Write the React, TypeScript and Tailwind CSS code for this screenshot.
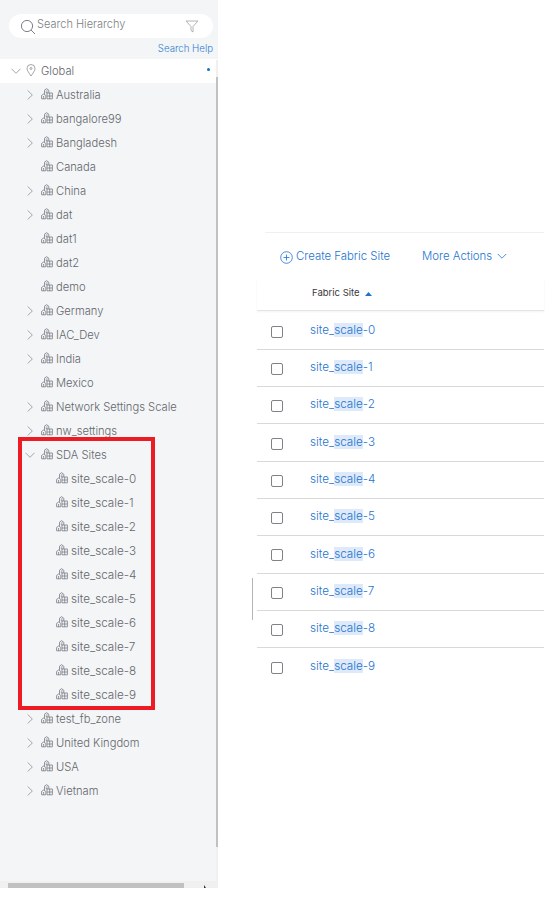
import React from "react";

const Chev = ({ open }: { open?: boolean }) => (
  <svg width="10" height="10" viewBox="0 0 10 10" fill="none" stroke="#8d9196" strokeWidth="0.8">
    {open ? <path d="M0.5 2.8 L5 7.3 L9.5 2.8" /> : <path d="M2.8 0.5 L7.3 5 L2.8 9.5" />}
  </svg>
);

const Site = () => (
  <svg width="12" height="12" viewBox="0 0 12 12" fill="#f4f5f7" stroke="#85898e" strokeWidth="0.9" className="shrink-0 -translate-y-[1px]">
    <path d="M3.5 6 V2.2 L5.5 0.7 L7.8 2.2 V5" />
    <path d="M4.8 3 H6.6 M4.8 4.6 H6.6" />
    <path d="M0.6 10.8 V7.4 L2.6 6 L4.8 7.4 V10.8 Z" />
    <path d="M6 10.8 V5 H11.4 V10.8 Z" />
    <path d="M8.7 5 V10.8 M6 8 H11.4 M2.6 8 V10.8" />
  </svg>
);

const rowsTop = ["Australia", "bangalore99", "Bangladesh", "Canada", "China", "dat", "dat1", "dat2", "demo", "Germany", "IAC_Dev", "India", "Mexico", "Network Settings Scale", "nw_settings"];
const leafTop = ["Canada", "dat1", "dat2", "demo", "Mexico"];
const rowsBottom = ["test_fb_zone", "United Kingdom", "USA", "Vietnam"];
const sites = [0, 1, 2, 3, 4, 5, 6, 7, 8, 9];

const TreeRow = ({ label, leaf, open }: { label: string; leaf?: boolean; open?: boolean }) => (
  <div className="flex h-6 items-center pl-[25px]">
    <span className="flex w-[16px] shrink-0 items-center">{leaf ? null : <Chev open={open} />}</span>
    <Site />
    <span className="ml-[3px] whitespace-nowrap">{label}</span>
  </div>
);

const rowTextFont = { fontFamily: '"Inter", sans-serif' };

export default function App() {
  return (
    <div className="relative flex h-[908px] w-[555px] overflow-hidden bg-white font-light text-[11.2px] text-[#63676c]" style={rowTextFont}>
      <aside className="relative flex h-[888px] w-[218px] shrink-0 flex-col bg-[#f4f5f7]">
        <div className="px-[5px] pt-[14px]">
          <div className="ml-[4px] flex h-6 w-[204px] items-center rounded-full bg-white pl-[11px] pr-[14px]">
            <svg width="16" height="16" viewBox="0 0 16 16" fill="none" stroke="#6f7377" strokeWidth="0.9" className="shrink-0 translate-y-[1px]">
              <circle cx="7" cy="7" r="5.6" />
              <path d="M11 11 L15 15" />
            </svg>
            <span className="ml-[1px] -translate-y-[2px] text-[11px] text-[#7b7f84]">Search Hierarchy</span>
            <svg width="14" height="13" viewBox="0 0 14 13" fill="none" stroke="#a9acb0" strokeWidth="0.9" className="ml-auto">
              <path d="M1 1 H13 L8 6.5 V12 L6 10.5 V6.5 Z" />
            </svg>
          </div>
          <div className="mt-[4px] text-right text-[9.7px] leading-[14px] text-[#2f7dd3]">Search Help</div>
        </div>
        <div className="mt-[3px]">
          <div className="relative flex h-6 items-center bg-white pl-[11px]">
            <span className="flex w-[15px] items-center"><Chev open /></span>
            <svg width="10" height="13" viewBox="0 0 10 13" fill="none" stroke="#8d9196" strokeWidth="0.8" className="-translate-y-[1px]">
              <path d="M5 12 C3 9 1 6.5 1 4.5 A4 4 0 0 1 9 4.5 C9 6.5 7 9 5 12 Z" />
              <circle cx="5" cy="4.5" r="1" />
            </svg>
            <span className="ml-[5px]">Global</span>
            <span className="absolute right-[8px] top-[9px] h-[3px] w-[3px] rounded-full bg-[#0d6fd1]" />
          </div>
          {rowsTop.map((r) => (
            <TreeRow key={r} label={r} leaf={leafTop.includes(r)} />
          ))}
          <TreeRow label="SDA Sites" open />
          {sites.map((n) => (
            <div key={n} className="flex h-6 items-center pl-[56px]">
              <Site />
              <span className="ml-[3px] translate-y-[1px] text-[11.7px]">site_scale-{n}</span>
            </div>
          ))}
          {rowsBottom.map((r) => (
            <TreeRow key={r} label={r} />
          ))}
        </div>
        <div className="absolute right-0 top-[60px] h-[821px] w-[2px] bg-[#f0f0f0]">
          <div className="mt-[17px] h-[770px] w-[2px] bg-[#c1c1c1]" />
        </div>
        <div className="absolute bottom-0 left-0 flex h-[7px] w-full items-start bg-[#f0f0f0]">
          <div className="ml-[8px] mt-[2px] h-[5px] w-[176px] bg-[#c1c1c1]" />
          <svg width="4" height="3" viewBox="0 0 4 3" className="absolute left-[203px] top-[4px]"><path d="M1 0 L3 3 H1 Z" fill="#333" /></svg>
        </div>
      </aside>

      <main className="relative w-[326px] pl-[39px] pt-[232px]">
        <div className="ml-[8px] h-px bg-[#f0f0f0]" />
        <div className="flex h-[46px] items-center pl-[23px] text-[11.4px] text-[#1d74cf]">
          <svg width="13" height="13" viewBox="0 0 13 13" fill="none" stroke="#1d74cf" strokeWidth="0.8" className="translate-y-[1px]">
            <circle cx="6.5" cy="6.5" r="5.8" />
            <path d="M6.5 3.5 V9.5 M3.5 6.5 H9.5" />
          </svg>
          <span className="ml-[3px] translate-y-[1px]">Create Fabric Site</span>
          <span className="ml-[32px] translate-y-[1px]">More Actions</span>
          <svg width="10" height="10" viewBox="0 0 10 10" fill="none" stroke="#1d74cf" strokeWidth="0.8" className="ml-[5px]">
            <path d="M0.8 3 L5 7.2 L9.2 3" />
          </svg>
        </div>
        <div className="flex h-[32px] items-center border-b border-[#e4e4e4] pb-[2px] pl-[55px] text-[9.5px] font-normal text-[#39393b] shadow-[0_1px_2px_rgba(0,0,0,0.05)]">
          Fabric Site
          <svg width="7" height="4" viewBox="0 0 7 4" className="ml-[5px]"><path d="M0 4 L3.5 0 L7 4 Z" fill="#1d74cf" /></svg>
        </div>
        <div className="pt-[1.5px]">
          {sites.map((n) => (
            <div key={n} className={`flex h-[37.3px] items-center pl-[14px] ${n < 9 ? "border-b border-[#d9d9d9]" : ""}`}>
              <span className="h-3 w-3 translate-y-[1px] rounded-[2px] border border-[#7f8286] bg-white" />
              <span className="ml-[27px] text-[11.7px] text-[#1d74cf]">
                site_<span className="bg-[#deeafa]">scale</span>-{n}
              </span>
            </div>
          ))}
        </div>
        <div className="absolute left-[34px] top-[578px] h-[42px] w-px bg-[#b5b5b5]" />
      </main>

      <div className="absolute left-[18px] top-[437px] h-[273px] w-[137px] border-4 border-[#ed1c24]" />
    </div>
  );
}
